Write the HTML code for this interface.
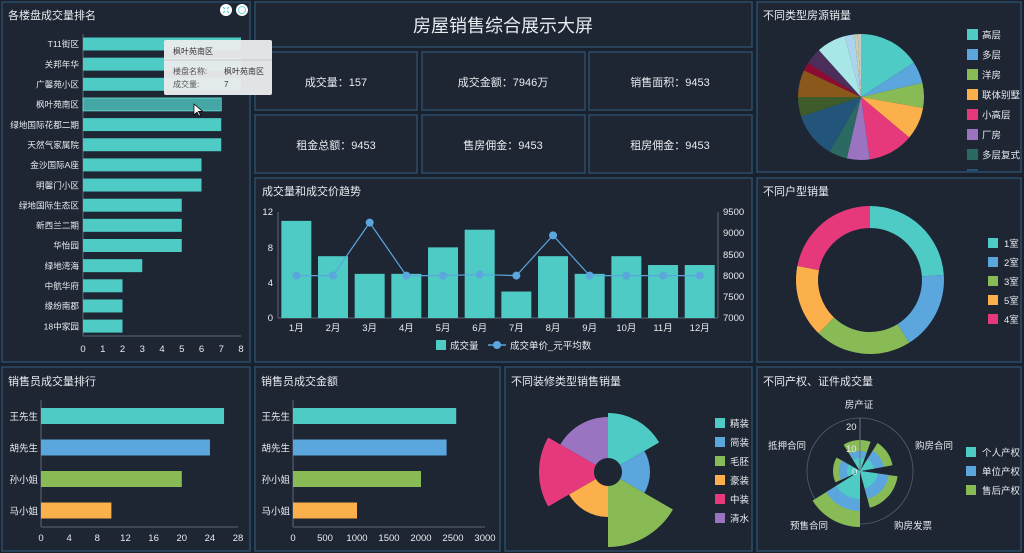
<!DOCTYPE html>
<html><head><meta charset="utf-8">
<style>
html,body{margin:0;padding:0;background:#1d2331;width:1024px;height:553px;overflow:hidden}
svg{display:block}
text{font-family:"Liberation Sans","Noto Sans CJK SC",sans-serif;fill:#e8ecf0}
.t{font-size:11px}
.l{font-size:9.5px}
.s{font-size:8.6px}
.p{fill:#1e2533;stroke:#2b4d6a;stroke-width:1.5}
.ax{stroke:#5a6675;stroke-width:1}
</style></head><body>
<svg id="s" width="1024" height="553" viewBox="0 0 1024 553" xmlns="http://www.w3.org/2000/svg">
<rect width="1024" height="553" fill="#1a202c"/>
<rect class="p" x="2" y="2" width="248" height="360"/>
<rect class="p" x="255" y="2" width="497" height="45"/>
<rect class="p" x="255" y="52" width="162" height="58"/>
<rect class="p" x="422" y="52" width="163" height="58"/>
<rect class="p" x="589" y="52" width="163" height="58"/>
<rect class="p" x="255" y="115" width="162" height="58"/>
<rect class="p" x="422" y="115" width="163" height="58"/>
<rect class="p" x="589" y="115" width="163" height="58"/>
<rect class="p" x="255" y="178" width="497" height="184"/>
<rect class="p" x="757" y="2" width="264" height="170"/>
<rect class="p" x="757" y="178" width="264" height="184"/>
<rect class="p" x="2" y="367" width="248" height="184"/>
<rect class="p" x="255" y="367" width="245" height="184"/>
<rect class="p" x="505" y="367" width="247" height="184"/>
<rect class="p" x="757" y="367" width="264" height="184"/>

<text x="503" y="32" font-size="18" text-anchor="middle">房屋销售综合展示大屏</text>
<g font-size="11" text-anchor="middle">
<text x="336" y="86">成交量：157</text>
<text x="503" y="86">成交金额：7946万</text>
<text x="670" y="86">销售面积：9453</text>
<text x="336" y="149">租金总额：9453</text>
<text x="503" y="149">售房佣金：9453</text>
<text x="670" y="149">租房佣金：9453</text>
</g>

<text class="t" x="8" y="19">各楼盘成交量排名</text>
<text class="t" x="262" y="195">成交量和成交价趋势</text>
<text class="t" x="763" y="19">不同类型房源销量</text>
<text class="t" x="763" y="195">不同户型销量</text>
<text class="t" x="8" y="385">销售员成交量排行</text>
<text class="t" x="261" y="385">销售员成交金额</text>
<text class="t" x="511" y="385">不同装修类型销售销量</text>
<text class="t" x="763" y="385">不同产权、证件成交量</text>

<circle cx="226" cy="10" r="6" fill="#fff"/><circle cx="242" cy="10" r="6" fill="#fff"/>
<path d="M223 7l2 2M229 7l-2 2M223 13l2-2M229 13l-2-2" stroke="#4ecbc4" stroke-width="1"/>
<circle cx="242" cy="10" r="3.5" fill="none" stroke="#4ecbc4" stroke-width="0.8"/>

<line class="ax" x1="83" y1="34" x2="83" y2="336"/>
<line class="ax" x1="83" y1="336" x2="241" y2="336"/>
<g id="lb"></g>
<g class="l" text-anchor="middle" id="lbx"></g>

<rect x="164" y="40" width="108" height="55" rx="2" fill="#e9ebec" opacity="0.96"/>
<line x1="164" y1="60" x2="272" y2="60" stroke="#c8cacc"/>
<g font-size="8">
<text x="173" y="54" style="fill:#333">枫叶苑南区</text>
<text x="173" y="74" style="fill:#555">楼盘名称:</text><text x="224" y="74" style="fill:#333">枫叶苑南区</text>
<text x="173" y="87" style="fill:#555">成交量:</text><text x="224" y="87" style="fill:#333">7</text>
</g>
<path d="M194 104l0 11 3-3 2 4 1.5-.7-2-4 4 0z" fill="#fff" stroke="#000" stroke-width="0.7"/>

<line class="ax" x1="278" y1="212" x2="278" y2="318"/>
<line class="ax" x1="718" y1="212" x2="718" y2="318"/>
<line class="ax" x1="278" y1="318" x2="718" y2="318"/>
<g id="tr"></g>
<g class="l">
<text x="273" y="215" text-anchor="end">12</text><text x="273" y="251" text-anchor="end">8</text>
<text x="273" y="286" text-anchor="end">4</text><text x="273" y="321" text-anchor="end">0</text>
<text x="723" y="215">9500</text><text x="723" y="236">9000</text><text x="723" y="258">8500</text>
<text x="723" y="279">8000</text><text x="723" y="300">7500</text><text x="723" y="321">7000</text>
</g>
<rect x="436" y="340" width="10" height="10" fill="#4ecbc4"/>
<text class="l" x="450" y="349">成交量</text>
<line x1="488" y1="345" x2="506" y2="345" stroke="#5aa6dd" stroke-width="1.5"/><circle cx="497" cy="345" r="4" fill="#5aa6dd"/>
<text class="l" x="510" y="349">成交单价_元平均数</text>

<g id="pl"></g>
<g id="pie"></g>
<g id="donut"></g>
<g class="l" id="dl"></g>
<g id="sp"></g>
<g id="rose"></g>
<g class="l" id="rl"></g>

<circle cx="860" cy="471" r="53" fill="none" stroke="#4a5566"/>
<g id="polar"></g>
<line x1="860" y1="418" x2="860" y2="471" stroke="#6a7584"/>
<g class="l">
<text x="859" y="408" text-anchor="middle">房产证</text>
<text x="915" y="449">购房合同</text>
<text x="894" y="529">购房发票</text>
<text x="790" y="529">预售合同</text>
<text x="768" y="449">抵押合同</text>
<text x="846" y="430">20</text><text x="846" y="452">10</text><text x="852" y="475">0</text>
</g>
<g class="l" id="ql"></g>
</svg>
<script>
var N="http://www.w3.org/2000/svg";
function el(p,t,a,txt){var e=document.createElementNS(N,t);for(var k in a)e.setAttribute(k,a[k]);if(txt!=null)e.textContent=txt;document.getElementById(p).appendChild(e);return e;}
function pt(cx,cy,r,a){a=(a-90)*Math.PI/180;return [cx+r*Math.cos(a),cy+r*Math.sin(a)];}
function sec(cx,cy,r0,r1,a0,a1){var L=(a1-a0)>180?1:0,p1=pt(cx,cy,r1,a0),p2=pt(cx,cy,r1,a1);
 if(r0<=0)return "M"+cx+" "+cy+"L"+p1+"A"+r1+" "+r1+" 0 "+L+" 1 "+p2+"Z";
 var p3=pt(cx,cy,r0,a1),p4=pt(cx,cy,r0,a0);return "M"+p1+"A"+r1+" "+r1+" 0 "+L+" 1 "+p2+"L"+p3+"A"+r0+" "+r0+" 0 "+L+" 0 "+p4+"Z";}
var T="#4ecbc4",B="#5aa6dd",G="#88bb55",O="#fbb04b",P="#e5397c",U="#9a74c0";
var names=["T11街区","关邦年华","广馨苑小区","枫叶苑南区","绿地国际花都二期","天然气家属院","金沙国际A座","明馨门小区","绿地国际生态区","新西兰二期","华怡园","绿地湾海","中航华府","缘纷南郡","18中家园"],
vals=[8,8,8,7,7,7,6,6,5,5,5,3,2,2,2];
for(var i=0;i<15;i++){var y=44+i*20.15;el('lb','rect',{x:83,y:y-6.5,width:vals[i]*19.75,height:13,fill:i==3?"#45a6a6":T,stroke:i==3?"#7fe":"none","stroke-width":0.6});
 el('lb','text',{x:79,y:y+3.2,"text-anchor":"end","class":"s"},names[i]);}
for(var i=0;i<=8;i++)el('lbx','text',{x:83+i*19.75,y:352},i);
var tv=[11,7,5,5,8,10,3,7,5,7,6,6],lv=[8000,8000,9250,8000,8000,8025,8000,8950,8000,8000,8000,8000],pts=[];
for(var i=0;i<12;i++){var cx=278+36.67*(i+.5);el('tr','rect',{x:cx-15,y:318-tv[i]*8.83,width:30,height:tv[i]*8.83,fill:T});
 el('tr','text',{x:cx,y:331,"text-anchor":"middle","class":"l"},(i+1)+"月");pts.push([cx,318-(lv[i]-7000)/2500*106]);}
el('tr','polyline',{points:pts.join(" "),fill:"none",stroke:B,"stroke-width":1.2});
pts.forEach(function(p){el('tr','circle',{cx:p[0],cy:p[1],r:4,fill:B});});
var pc=[[0,57,T],[57,77,B],[77,100,G],[100,130,O],[130,172,P],[172,193,U],[193,210,"#2a6a63"],[210,252,"#23557a"],[252,270,"#3f5b2b"],[270,295,"#8a581a"],[295,303,"#8e0b34"],[303,318,"#4b2f5b"],[318,345,"#a8e6e8"],[345,354,"#add4ee"],[354,357,"#c9d2a0"],[357,360,"#c8c8c8"]];
pc.forEach(function(s){el('pie','path',{d:sec(861,97,0,63,s[0],s[1]),fill:s[2]});});
var pn=["高层","多层","洋房","联体别墅","小高层","厂房","多层复式","写字楼"],pcol=[T,B,G,O,P,U,"#2a6a63","#23557a"];
for(var i=0;i<7;i++){var y=29+i*20;
 el('pl','rect',{x:967,y:y,width:11,height:11,fill:pcol[i]});el('pl','text',{x:982,y:y+9.5,"class":"l"},pn[i]);}
el('pl','rect',{x:967,y:169,width:11,height:2,fill:pcol[7]});
[[0,86,T],[86,148,B],[148,224,G],[224,281,O],[281,360,P]].forEach(function(s){el('donut','path',{d:sec(870,280,52,74,s[0],s[1]),fill:s[2]});});
["1室","2室","3室","5室","4室"].forEach(function(n,i){var y=238+i*19;el('dl','rect',{x:988,y:y,width:10,height:10,fill:[T,B,G,O,P][i]});el('dl','text',{x:1004,y:y+9},n);});
var sn=["王先生","胡先生","孙小姐","马小姐"],sc=[T,B,G,O],v1=[26,24,20,10],v2=[2550,2400,2000,1000];
el('sp','line',{x1:41,y1:400,x2:41,y2:527,"class":"ax"});el('sp','line',{x1:41,y1:527,x2:238,y2:527,"class":"ax"});
el('sp','line',{x1:293,y1:400,x2:293,y2:527,"class":"ax"});el('sp','line',{x1:293,y1:527,x2:485,y2:527,"class":"ax"});
for(var i=0;i<4;i++){var y=408+i*31.5;
 el('sp','rect',{x:41,y:y,width:v1[i]*7.04,height:16,fill:sc[i]});el('sp','text',{x:38,y:y+12,"text-anchor":"end","class":"l"},sn[i]);
 el('sp','rect',{x:293,y:y,width:v2[i]*0.064,height:16,fill:sc[i]});el('sp','text',{x:290,y:y+12,"text-anchor":"end","class":"l"},sn[i]);}
for(var i=0;i<=7;i++)el('sp','text',{x:41+i*28.15,y:541,"text-anchor":"middle","class":"l"},i*4);
for(var i=0;i<=6;i++)el('sp','text',{x:293+i*32,y:541,"text-anchor":"middle","class":"l"},i*500);
[[0,60,59,T],[60,120,42,B],[120,180,75,G],[180,240,45,O],[240,300,69,P],[300,360,55,U]].forEach(function(s){el('rose','path',{d:sec(608,472,14,s[2],s[0],s[1]),fill:s[3]});});
["精装","简装","毛胚","豪装","中装","清水"].forEach(function(n,i){var y=418+i*19;el('rl','rect',{x:715,y:y,width:10,height:10,fill:[T,B,G,O,P,U][i]});el('rl','text',{x:730,y:y+9},n);});
[[-32,20,13,20,31],[32,80,14,24,33],[98,165,18,29,38],[180,238,28,40,56],[245,300,13,21,27]].forEach(function(s){
 el('polar','path',{d:sec(860,471,0,s[4],s[0],s[1]),fill:G});el('polar','path',{d:sec(860,471,0,s[3],s[0],s[1]),fill:B});el('polar','path',{d:sec(860,471,0,s[2],s[0],s[1]),fill:T});});
["个人产权","单位产权","售后产权"].forEach(function(n,i){var y=447+i*19;el('ql','rect',{x:966,y:y,width:10,height:10,fill:[T,B,G][i]});el('ql','text',{x:982,y:y+9},n);});
</script>
</body></html>
